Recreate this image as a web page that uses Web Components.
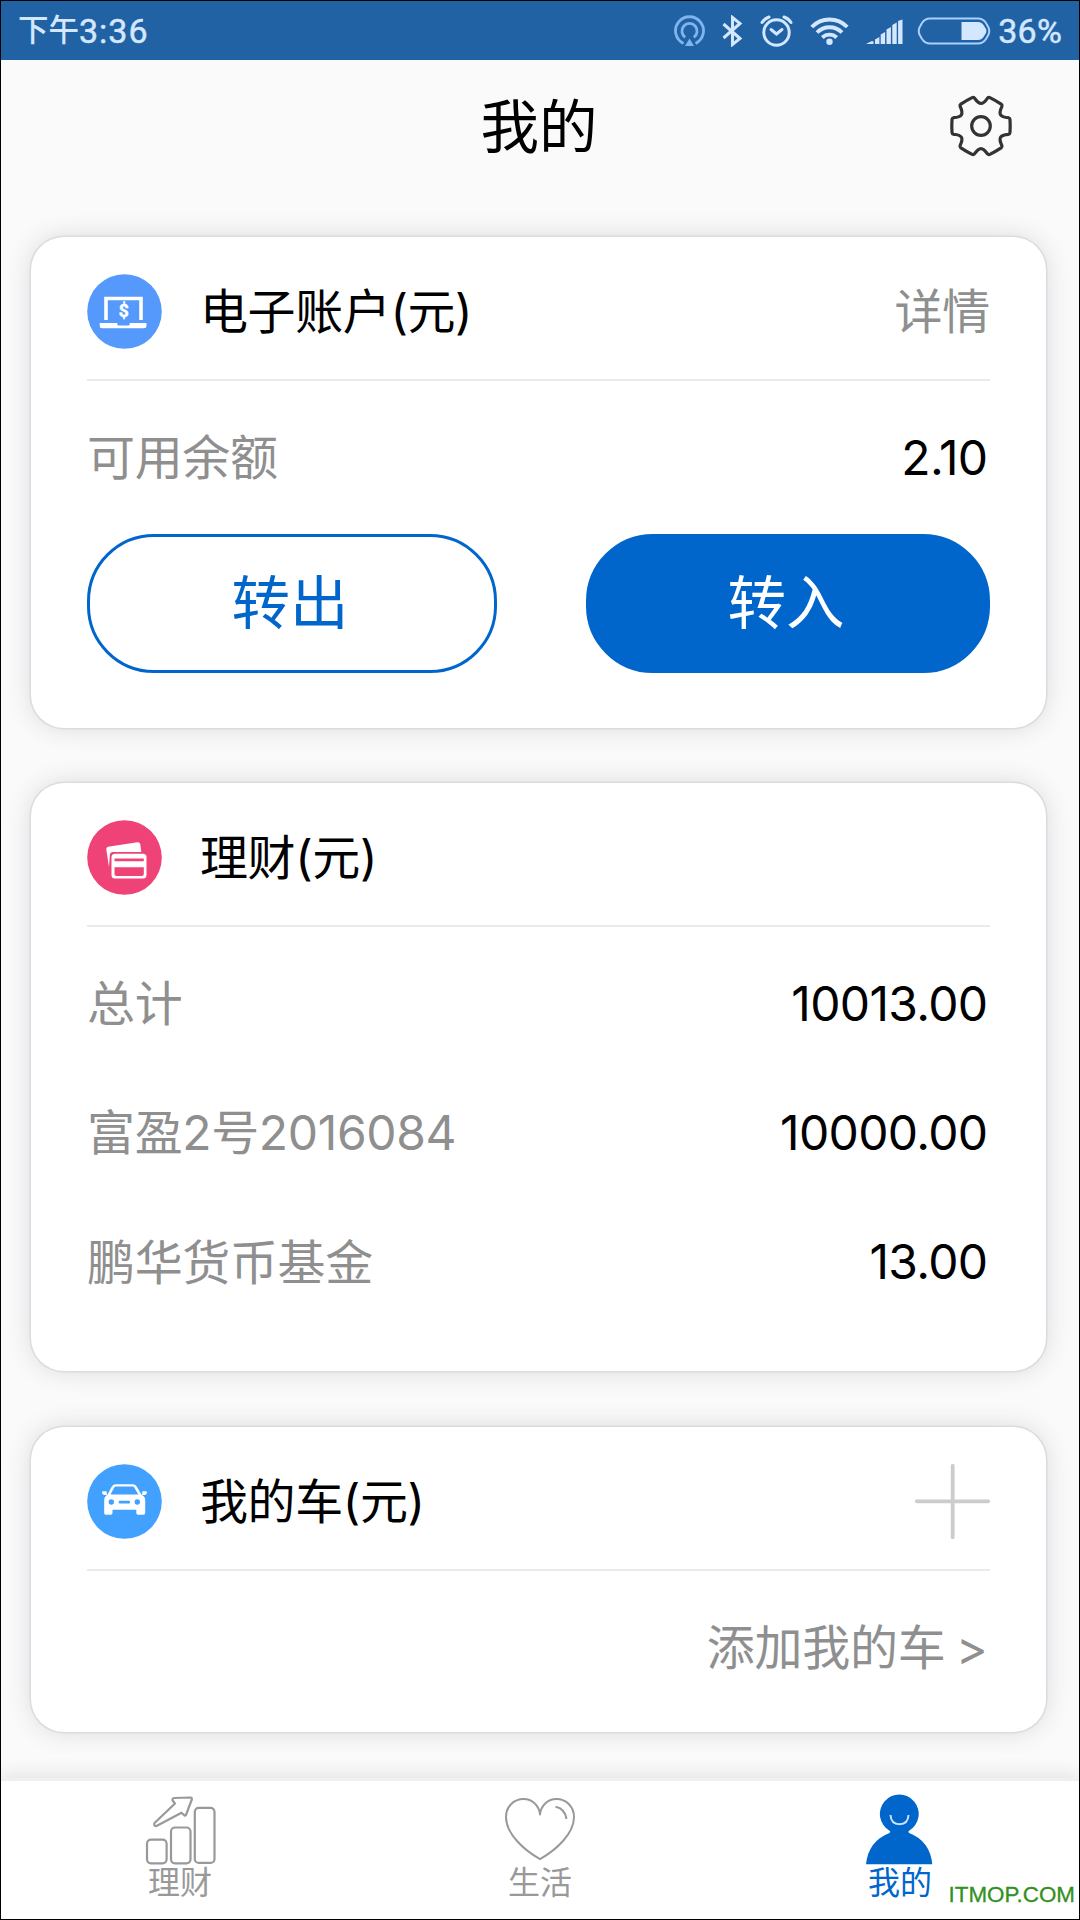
<!DOCTYPE html>
<html lang="zh-CN">
<head>
<meta charset="utf-8">
<title>我的</title>
<style>
html,body{margin:0;padding:0}
body{width:1080px;height:1920px;overflow:hidden;background:#000}
</style>
</head>
<body>
<bank-app></bank-app>
<script>
const tooth = [];
for (let i = 0; i < 6; i++) {
  const a = i * Math.PI / 3, c = Math.cos(a), s = Math.sin(a);
  const p = (x, y) => (x * c - y * s).toFixed(2) + ' ' + (x * s + y * c).toFixed(2);
  tooth.push(`${i ? 'L' : 'M'}${p(27.5,-8.3)}Q${p(28.8,-8)} ${p(29,-6.5)}Q${p(29.4,0)} ${p(29,6.5)}Q${p(28.8,8)} ${p(27.5,8.3)}C${p(18.8,9)} ${p(17.2,11.8)} ${p(20.9,19.7)}`);
}
const ICONS = {
  hotspot: [31, 32, `<g fill="none" stroke="#7fb4ee" stroke-width="2.8"><path d="M9.5 28.4A14 14 0 1 1 21.5 28.4"/><path d="M11.2 22.3A7.6 7.6 0 1 1 19.8 22.3"/></g><path d="M15.500 23.500L20 31H11Z" fill="#7fb4ee"/>`],
  bluetooth: [21, 32, `<path d="M1.500 9L18 23.500L10.500 29.500V2.500L18 8.500L1.500 23" fill="none" stroke="#d3e7ff" stroke-width="3"/>`],
  alarm: [33, 32, `<g fill="none" stroke="#d3e7ff" stroke-width="3" stroke-linecap="round"><circle cx="16.500" cy="17.500" r="12.700"/><path d="M11 14.500L16.500 19L22 14.500"/><path d="M2 7.500Q4.500 3.500 9 2M31 7.500Q28.500 3.500 24 2"/></g>`],
  wifi: [39, 32, `<g fill="none" stroke="#d3e7ff" stroke-width="3.900"><path d="M1.800 12A24.500 24.500 0 0 1 37.200 12"/><path d="M7 17.500A17.500 17.500 0 0 1 32 17.500"/><path d="M12.300 22.500A10.500 10.500 0 0 1 26.700 22.500"/></g><circle cx="19.500" cy="26.800" r="3.200" fill="#d3e7ff"/>`],
  signal: [37, 32, `<path d="M0 29L5.300 26.200H7.500V29ZM9 29V24.500L13.400 22V29ZM14.700 29V19.500L19.100 17V29ZM20.500 29V14.500L24.900 12V29ZM26.300 29V10L30.700 7.500V29ZM32.100 29V6L36.500 4.500V29Z" fill="#d3e7ff"/>`],
  battery: [74, 32, `<path d="M13 3.500H61Q66 3.500 69 8L71.500 12.500Q73 16 71.500 19.500L69 24Q66 28.500 61 28.500H13Q8 28.500 5 24L2.500 19.500Q1 16 2.500 12.500L5 8Q8 3.500 13 3.500Z" fill="none" stroke="#a9d0ff" stroke-width="2"/><path d="M44.500 7H61Q64.500 7 66.500 10L69 14Q69.900 16 69 18L66.500 22Q64.500 25 61 25H44.500Z" fill="#d3e7ff"/>`],
  gear: [64, 64, `<g transform="translate(32 32)" fill="none" stroke="#333" stroke-width="3.2" stroke-linejoin="round"><path d="${tooth.join('')}Z"/><circle r="9.300"/></g>`],
  laptop: [75, 75, `<circle cx="37.500" cy="37.500" r="37.300" fill="#5599fd"/><path d="M19 46V24.500H54V46" fill="none" stroke="#fff" stroke-width="3.600"/><path d="M12.700 49H30.300V50.500Q30.300 51.500 31.500 51.500H41.500Q42.700 51.500 42.700 50.500V49H59.500V52Q59.500 54.300 57 54.300H15Q12.700 54.300 12.700 52Z" fill="#fff"/><text x="36.700" y="43" text-anchor="middle" font-family="Roboto,sans-serif" font-weight="700" font-size="17.500" fill="#fff" stroke="#fff" stroke-width=".5">$</text>`],
  cards: [75, 75, `<circle cx="37.500" cy="37.500" r="37.300" fill="#ef4378"/><path d="M21 26.800L50.500 22.200Q52.800 22 53.200 24L54.300 32H25Q22.500 33 22.800 36L22 47L19.300 29.500Q19 27.200 21 26.800Z" fill="#fff"/><rect x="23" y="32" width="38" height="28" rx="5" fill="#ef4378"/><rect x="24.500" y="33.800" width="35" height="24.600" rx="3.500" fill="#fff"/><path d="M27.500 38.600H56.800V41.200H27.500ZM27.500 47.200H56.800V54Q56.800 56 54.800 56H29.500Q27.500 56 27.500 54Z" fill="#ef4378"/>`],
  car: [75, 75, `<circle cx="37.500" cy="37.500" r="37.300" fill="#42a0ff"/><path d="M20.500 30.800L24.500 23Q25.800 20.300 28.500 20.300H46Q48.800 20.300 50 23L54.500 30.800Q58.200 32.500 58.200 36V49Q58.200 50.800 56.500 50.800H51Q49.300 50.800 49.300 49V45.700H25.500V49Q25.500 50.800 23.800 50.800H18.800Q17.200 50.800 17.200 49V36Q17.200 32.500 20.500 30.800Z" fill="#fff"/><path d="M23.500 30.500L27.200 23.500Q27.700 22.500 29 22.500H45.500Q46.800 22.500 47.300 23.500L51.300 30.500Z" fill="#42a0ff"/><path d="M15.500 27.300H19.500L20 31L17 31Q15 30 15 28.500ZM59.500 27.300H55.500L55 31L58 31Q60 30 60 28.500Z" fill="#fff"/><circle cx="24.300" cy="38" r="2.700" fill="#42a0ff"/><circle cx="50.300" cy="38" r="2.700" fill="#42a0ff"/><rect x="31.700" y="36.800" width="11.300" height="2.600" rx="1" fill="#42a0ff"/>`],
  plus: [75, 75, `<path d="M37.700 1.800V73.200M1.800 37.300H73.200" stroke="#ccc" stroke-width="3.800" stroke-linecap="round"/>`],
  chart: [80, 76, `<g fill="none" stroke="#999" stroke-width="2.200" stroke-linejoin="round"><rect x="7" y="49.700" width="19.600" height="23.600" rx="4"/><rect x="31" y="37.500" width="19.500" height="35.800" rx="4"/><rect x="54.800" y="17.900" width="19.700" height="55" rx="4"/><path d="M14.500 33L35 13.500L32.600 10.500Q32.200 8.200 34 8L50.500 7.500Q52.200 7.600 51.800 9.500L46 25Q45.200 26.500 44 25L41.500 22.700L17 35.800Q15 36.500 14.300 35Q14 34 14.500 33Z"/></g>`],
  heart: [80, 76, `<g fill="none" stroke="#999" stroke-width="2" stroke-linejoin="round"><path d="M40 24.500C39 15 32 9 23.500 9C13.500 9 6 17 6 27C6 44 24 60 40 69.200C56 60 74 44 74 27C74 17 66.500 9 56.500 9C48 9 41 15 40 24.500Z"/><path d="M55.500 16.700Q65 18.500 66.500 29"/></g>`],
  person: [80, 76, `<path d="M6 74.300Q8.500 51 29.500 43A1.500 1.500 0 0 0 29.500 40.700A19.400 19.400 0 1 1 49.100 40.700A1.500 1.500 0 0 0 49.100 43Q70 51 72.300 74.300Z" fill="#0066cc"/><path d="M30.500 25Q31 34.200 39.500 34.200Q48 34.200 48.500 25" fill="none" stroke="#c9e2ff" stroke-width="2"/>`]
};
const define = (name, html) => {
  const t = document.createElement('template');
  t.innerHTML = html;
  customElements.define(name, class extends HTMLElement {
    constructor() { super(); this.attachShadow({mode: 'open'}).append(t.content.cloneNode(true)); }
  });
};
customElements.define('app-icon', class extends HTMLElement {
  connectedCallback() {
    if (this.shadowRoot) return;
    const [w, h, body] = ICONS[this.getAttribute('name')];
    this.attachShadow({mode: 'open'}).innerHTML = `<style>:host{display:block;flex:none;width:${w}px;height:${h}px}svg{display:block}</style><svg width="${w}" height="${h}" viewBox="0 0 ${w} ${h}">${body}</svg>`;
  }
});
define('status-bar', `<style>
:host{display:flex;align-items:center;height:59px;box-sizing:border-box;padding:0 17px 0 17px;background:#2162a5;color:#d3e7ff;font:34px/40px Roboto,"Noto Sans CJK SC",sans-serif}
.time{display:flex;align-items:center;margin-right:auto}
.cjk{font-size:30.500px;font-weight:500;padding-top:1px}
.time b{font-weight:400;letter-spacing:1px;-webkit-text-stroke:.5px #d3e7ff}
.pct{margin-left:7px;-webkit-text-stroke:.5px #d3e7ff;letter-spacing:.2px}
</style><div class="time"><span class="cjk">下午</span><b>3:36</b></div>
<app-icon name="hotspot"></app-icon><app-icon name="bluetooth" style="margin-left:17px"></app-icon><app-icon name="alarm" style="margin-left:17px"></app-icon><app-icon name="wifi" style="margin-left:17px"></app-icon><app-icon name="signal" style="margin-left:17px"></app-icon><app-icon name="battery" style="margin-left:14px"></app-icon><span class="pct">36%</span>`);
define('title-bar', `<style>
:host{display:grid;grid-template-columns:1fr auto 1fr;align-items:center;height:132px;padding:0 66px 0 65px}
h1{margin:0;padding:2px 1px 0 0;font-size:58.500px;line-height:80px;font-weight:400;color:#000}
app-icon{justify-self:end}
</style><span></span><h1><slot></slot></h1><app-icon name="gear"></app-icon>`);
define('account-card', `<style>
:host{display:block;box-sizing:border-box;background:#fff;border-radius:33px;padding:0 56px;box-shadow:0 0 0 1.500px #dcdcdf,0 0 24px rgba(60,60,90,.17)}
header{display:flex;align-items:center;height:75px;padding:37px 0 30px;border-bottom:2px solid #ebebeb;font-size:48px;line-height:70px;color:#000}
.t{margin:1px 0 0 38px;flex:1;letter-spacing:-.4px}
.body{padding-top:12px}
</style><header><slot name="icon"></slot><span class="t"><slot name="title"></slot></span><slot name="action"></slot></header><div class="body"><slot></slot></div>`);
define('amount-row', `<style>
:host{display:flex;justify-content:space-between;align-items:center;height:129.300px;font-size:48px;line-height:70px;color:#8f8f8f}
.l{padding-top:1px;letter-spacing:-.35px}
.v{color:#000;margin-right:2.500px;letter-spacing:-.65px}
</style><span class="l"><slot></slot></span><span class="v"><slot name="value"></slot></span>`);
define('pill-button', `<style>
:host{display:flex;align-items:center;justify-content:center;box-sizing:border-box;height:138.500px;border:3px solid #0066cc;border-radius:67px;color:#0066cc;font-size:58.500px;line-height:80px;padding:0 4px 1px 0}
:host([primary]){background:#0066cc;color:#fff}
</style><slot></slot>`);
define('tab-item', `<style>
:host{display:flex;flex-direction:column;align-items:center;flex:1;color:#999;font-size:32px;line-height:34px}
:host([active]){color:#0066cc}
</style><slot name="icon"></slot><span><slot></slot></span>`);
define('tab-bar', `<style>
:host{display:flex;box-sizing:border-box;height:138px;padding-top:9px;background:#fff;box-shadow:0 -3px 0 #efefef,0 -6px 18px rgba(0,0,0,.1)}
</style><slot></slot>`);
define('bank-app', `<style>
:host{display:flex;flex-direction:column;position:relative;box-sizing:border-box;width:1080px;height:1920px;border:1px solid #000;background:#fafafa;overflow:hidden;font-family:Inter,"Noto Sans CJK SC",sans-serif}
main{display:flex;flex-direction:column;padding:45px 33px 0 30px;flex:1}
.a{height:491px}.b{height:588px;margin-top:55px}.c{height:305px;margin-top:56px}
.more{color:#8f8f8f;margin:1px 0 0 0;letter-spacing:-.2px;word-spacing:-3px}
.buttons{display:grid;grid-template-columns:410px 404px;justify-content:space-between;margin-top:12px}
.mark{position:absolute;right:4px;bottom:11px;font:22.400px/26px "Liberation Sans",sans-serif;color:#339022;-webkit-text-stroke:.3px #339022}
tab-bar{margin:0 -1px}
</style>
<status-bar></status-bar><title-bar>我的</title-bar>
<main>
<account-card class="a"><app-icon slot="icon" name="laptop"></app-icon><span slot="title">电子账户(元)</span><span slot="action" class="more">详情</span>
<amount-row>可用余额<span slot="value">2.10</span></amount-row>
<div class="buttons"><pill-button>转出</pill-button><pill-button primary>转入</pill-button></div></account-card>
<account-card class="b"><app-icon slot="icon" name="cards"></app-icon><span slot="title">理财(元)</span>
<amount-row>总计<span slot="value">10013.00</span></amount-row><amount-row>富盈2号2016084<span slot="value">10000.00</span></amount-row><amount-row>鹏华货币基金<span slot="value">13.00</span></amount-row></account-card>
<account-card class="c"><app-icon slot="icon" name="car"></app-icon><span slot="title">我的车(元)</span><app-icon slot="action" name="plus"></app-icon>
<amount-row><span slot="value" class="more">添加我的车 &gt;</span></amount-row></account-card>
</main>
<tab-bar><tab-item><app-icon slot="icon" name="chart"></app-icon>理财</tab-item><tab-item><app-icon slot="icon" name="heart"></app-icon>生活</tab-item><tab-item active><app-icon slot="icon" name="person"></app-icon>我的</tab-item></tab-bar>
<div class="mark">ITMOP.COM</div>`);
</script>
</body>
</html>
